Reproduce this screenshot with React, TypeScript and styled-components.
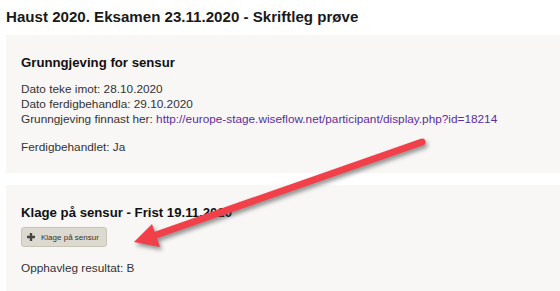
import React from 'react';
import styled, { createGlobalStyle } from 'styled-components';

const GlobalStyle = createGlobalStyle`
  html, body {
    margin: 0;
    padding: 0;
    background: #ffffff;
  }
  body {
    font-family: "Liberation Sans", Arial, sans-serif;
    color: #333333;
  }
`;

const Page = styled.div`
  position: relative;
  width: 560px;
  height: 291px;
  overflow: hidden;
  padding-left: 6px;
  box-sizing: border-box;
`;

const Title = styled.h1`
  margin: 7px 0 8px;
  font-size: 15.1px;
  line-height: 20px;
  font-weight: bold;
  color: #1a1a1a;
  white-space: nowrap;
`;

const Panel = styled.section<{ $gap?: number }>`
  background: #f8f7f6;
  padding: 20px 15px 18px 15px;
  margin-bottom: ${(p) => p.$gap ?? 0}px;
`;

const PanelTitle = styled.h2`
  margin: 0;
  font-size: 13.2px;
  line-height: 16px;
  font-weight: bold;
  color: #111111;
  white-space: nowrap;
`;

const Lines = styled.div<{ $top: number }>`
  margin-top: ${(p) => p.$top}px;
  font-size: 11.8px;
  line-height: 15px;
  color: #333333;
  white-space: nowrap;
`;

const Line = styled.div``;

const Link = styled.a`
  color: #5a2d9f;
  text-decoration: none;
`;

const Button = styled.button`
  display: flex;
  align-items: center;
  gap: 6px;
  margin-top: 6px;
  height: 20px;
  padding: 0 7px 0 5px;
  border: 1px solid #c7c4b6;
  border-radius: 3px;
  background: #dcdad0;
  font-family: "Liberation Sans", Arial, sans-serif;
  font-size: 8px;
  color: #333333;
  cursor: pointer;
`;

const PlusIcon = () => (
  <svg width="8" height="8" viewBox="0 0 8 8" aria-hidden="true">
    <path d="M2.8 0h2.4v2.8H8v2.4H5.2V8H2.8V5.2H0V2.8h2.8z" fill="#454545" />
  </svg>
);

const Arrow = styled.svg`
  position: absolute;
  left: 0;
  top: 0;
  pointer-events: none;
  filter: drop-shadow(2px 3px 2px rgba(60, 60, 60, 0.55));
`;

export default function App() {
  return (
    <>
      <GlobalStyle />
      <Page>
        <Title>Haust 2020. Eksamen 23.11.2020 - Skriftleg prøve</Title>

        <Panel $gap={12}>
          <PanelTitle>Grunngjeving for sensur</PanelTitle>
          <Lines $top={11}>
            <Line>Dato teke imot: 28.10.2020</Line>
            <Line>Dato ferdigbehandla: 29.10.2020</Line>
            <Line>
              Grunngjeving finnast her:{' '}
              <Link href="#">
                http://europe-stage.wiseflow.net/participant/display.php?id=18214
              </Link>
            </Line>
          </Lines>
          <Lines $top={13}>
            <Line>Ferdigbehandlet: Ja</Line>
          </Lines>
        </Panel>

        <Panel>
          <PanelTitle>Klage på sensur - Frist 19.11.2020</PanelTitle>
          <Button type="button">
            <PlusIcon />
            Klage på sensur
          </Button>
          <Lines $top={14}>
            <Line>Opphavleg resultat: B</Line>
          </Lines>
        </Panel>

        <Arrow width="560" height="291" viewBox="0 0 560 291">
          <line
            x1="422"
            y1="142"
            x2="153"
            y2="236"
            stroke="#f2404a"
            strokeWidth="7"
            strokeLinecap="round"
          />
          <polygon points="134,242 152,224 160,247" fill="#f2404a" />
        </Arrow>
      </Page>
    </>
  );
}
